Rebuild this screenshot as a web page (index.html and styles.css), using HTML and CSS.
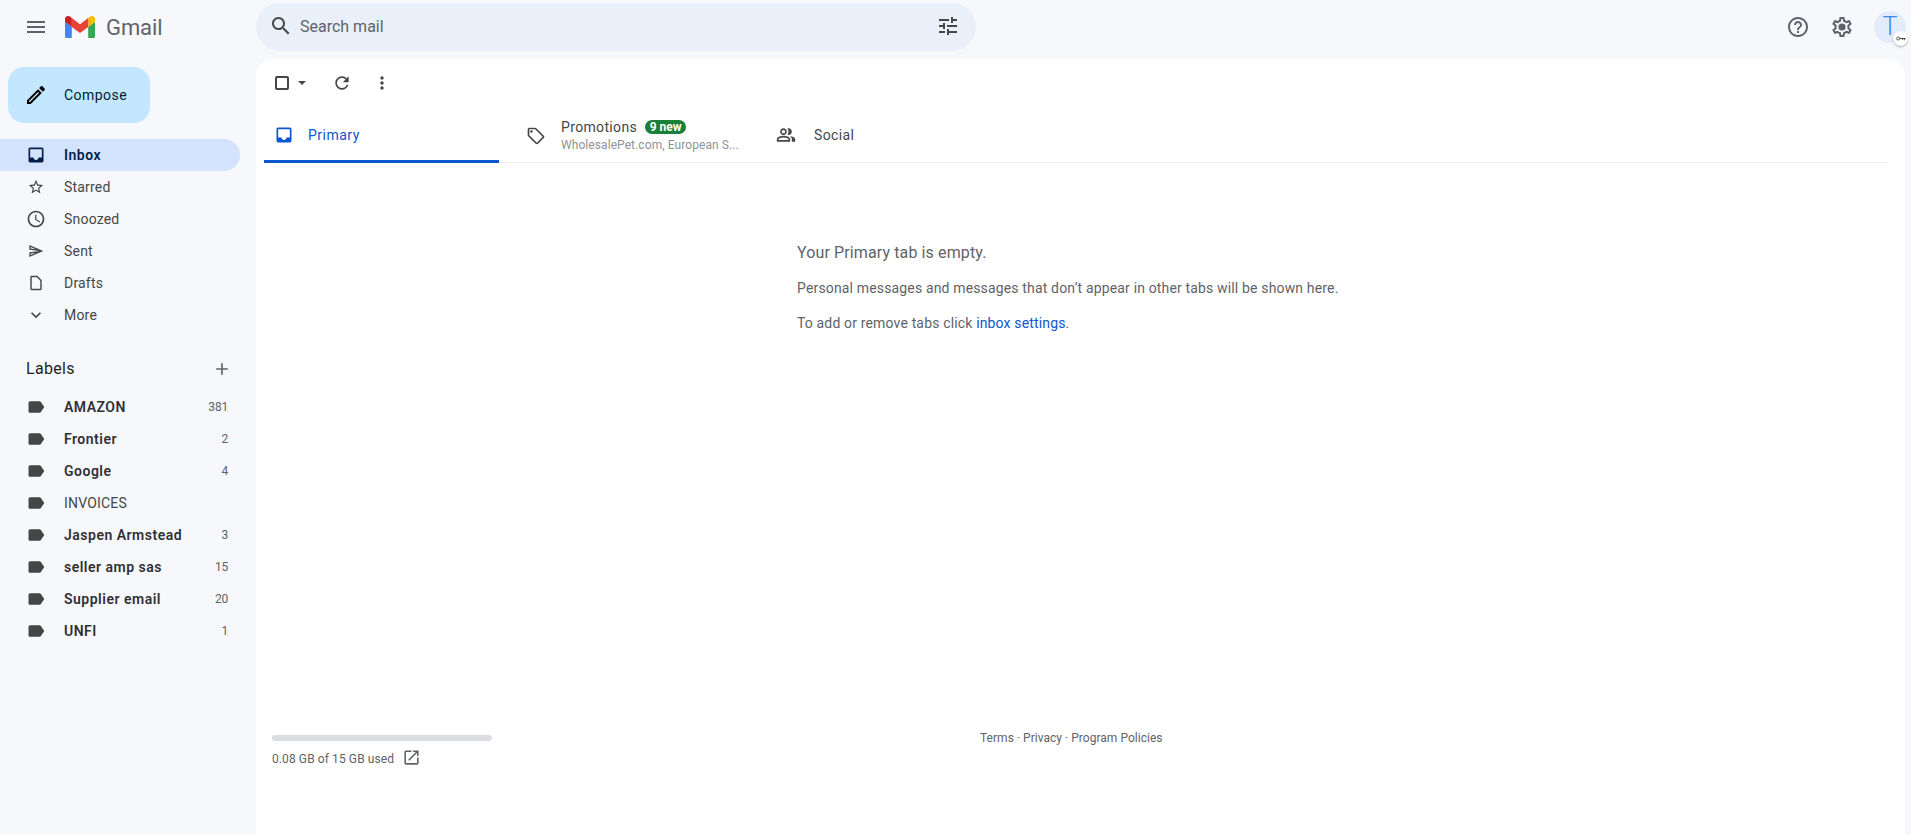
FILE: index.html
```html
<!DOCTYPE html>
<html lang="en">
<head>
<meta charset="utf-8">
<title>Gmail</title>
<link rel="stylesheet" href="styles.css">
</head>
<body>
<svg class="sprite" xmlns="http://www.w3.org/2000/svg">
  <symbol id="i-menu" viewBox="0 0 24 24"><path d="M3 18h18v-2H3v2zm0-5h18v-2H3v2zm0-7v2h18V6H3z"/></symbol>
  <symbol id="i-search" viewBox="0 0 24 24"><path d="M15.5 14h-.79l-.28-.27C15.41 12.59 16 11.11 16 9.5 16 5.91 13.09 3 9.5 3S3 5.91 3 9.5 5.91 16 9.5 16c1.61 0 3.09-.59 4.23-1.57l.27.28v.79l5 4.99L20.49 19l-4.99-5zm-6 0C7.01 14 5 11.99 5 9.5S7.01 5 9.5 5 14 7.01 14 9.5 11.99 14 9.5 14z"/></symbol>
  <symbol id="i-tune" viewBox="0 0 24 24"><path d="M3 17v2h6v-2H3zM3 5v2h10V5H3zm10 16v-2h8v-2h-8v-2h-2v6h2zM7 9v2H3v2h4v2h2V9H7zm14 4v-2H11v2h10zm-6-4h2V7h4V5h-4V3h-2v6z"/></symbol>
  <symbol id="i-help" viewBox="0 0 24 24"><path d="M11 18h2v-2h-2v2zm1-16C6.48 2 2 6.48 2 12s4.48 10 10 10 10-4.48 10-10S17.52 2 12 2zm0 18c-4.41 0-8-3.59-8-8s3.59-8 8-8 8 3.59 8 8-3.59 8-8 8zm0-14c-2.21 0-4 1.79-4 4h2c0-1.1.9-2 2-2s2 .9 2 2c0 2-3 1.75-3 5h2c0-2.25 3-2.5 3-5 0-2.21-1.79-4-4-4z"/></symbol>
  <symbol id="i-gear" viewBox="0 0 24 24"><path d="M19.43 12.98c.04-.32.07-.64.07-.98 0-.34-.03-.66-.07-.98l2.11-1.65c.19-.15.24-.42.12-.64l-2-3.46c-.09-.16-.26-.25-.44-.25-.06 0-.12.01-.17.03l-2.49 1c-.52-.4-1.08-.73-1.69-.98l-.38-2.65C14.46 2.18 14.25 2 14 2h-4c-.25 0-.46.18-.49.42l-.38 2.65c-.61.25-1.17.59-1.69.98l-2.49-1c-.06-.02-.12-.03-.18-.03-.17 0-.34.09-.43.25l-2 3.46c-.13.22-.07.49.12.64l2.11 1.65c-.04.32-.07.65-.07.98 0 .33.03.66.07.98l-2.11 1.65c-.19.15-.24.42-.12.64l2 3.46c.09.16.26.25.44.25.06 0 .12-.01.17-.03l2.49-1c.52.4 1.08.73 1.69.98l.38 2.65c.03.24.24.42.49.42h4c.25 0 .46-.18.49-.42l.38-2.65c.61-.25 1.17-.59 1.69-.98l2.49 1c.06.02.12.03.18.03.17 0 .34-.09.43-.25l2-3.46c.12-.22.07-.49-.12-.64l-2.11-1.65zm-1.98-1.71c.04.31.05.52.05.73 0 .21-.02.43-.05.73l-.14 1.13.89.7 1.08.84-.7 1.21-1.27-.51-1.04-.42-.9.68c-.43.32-.84.56-1.25.73l-1.06.43-.16 1.13-.2 1.35h-1.4l-.19-1.35-.16-1.13-1.06-.43c-.43-.18-.83-.41-1.23-.71l-.91-.7-1.06.43-1.27.51-.7-1.21 1.08-.84.89-.7-.14-1.13c-.03-.31-.05-.54-.05-.74s.02-.43.05-.73l.14-1.13-.89-.7-1.08-.84.7-1.21 1.27.51 1.04.42.9-.68c.43-.32.84-.56 1.25-.73l1.06-.43.16-1.13.2-1.35h1.39l.19 1.35.16 1.13 1.06.43c.43.18.83.41 1.23.71l.91.7 1.06-.43 1.27-.51.7 1.21-1.07.85-.89.7.14 1.13z"/><circle cx="12" cy="12" r="3.6"/></symbol>
  <symbol id="i-pencil" viewBox="0 0 24 24"><path d="M3 17.25V21h3.75L17.81 9.94l-3.75-3.75L3 17.25zM5.92 19H5v-.92l9.06-9.06.92.92L5.92 19zM20.71 5.63l-2.34-2.34c-.2-.2-.45-.29-.71-.29s-.51.1-.7.29l-1.83 1.83 3.75 3.75 1.83-1.83c.39-.39.39-1.02 0-1.41z"/></symbol>
  <symbol id="i-inbox" viewBox="0 0 24 24"><path d="M19 3H4.99c-1.11 0-1.98.89-1.98 2L3 19c0 1.1.88 2 1.99 2H19c1.1 0 2-.9 2-2V5c0-1.11-.9-2-2-2zm0 12h-4c0 1.66-1.35 3-3 3s-3-1.34-3-3H4.99V5H19v10z"/></symbol>
  <symbol id="i-star" viewBox="-2 -2 28 28"><path d="M22 9.24l-7.19-.62L12 2 9.19 8.63 2 9.24l5.46 4.73L5.82 21 12 17.27 18.18 21l-1.63-7.03L22 9.24zM12 15.4l-3.76 2.27 1-4.28-3.32-2.88 4.38-.38L12 6.1l1.71 4.04 4.38.38-3.32 2.88 1 4.28L12 15.4z"/></symbol>
  <symbol id="i-clock" viewBox="0 0 24 24"><path d="M11.99 2C6.47 2 2 6.48 2 12s4.47 10 9.99 10C17.52 22 22 17.52 22 12S17.52 2 11.99 2zM12 20c-4.42 0-8-3.58-8-8s3.58-8 8-8 8 3.58 8 8-3.58 8-8 8zm.5-13H11v6l5.25 3.15.75-1.23-4.5-2.67z"/></symbol>
  <symbol id="i-send" viewBox="-3 -3 30 30"><path d="M4.01 6.03l7.51 3.22-7.52-1 .01-2.22m7.5 8.72L4 17.97v-2.22l7.51-1M2.01 3L2 10l15 2-15 2 .01 7L23 12 2.01 3z"/></symbol>
  <symbol id="i-draft" viewBox="-2 -2 28 28"><path d="M6 2c-1.1 0-2 .9-2 2v16c0 1.1.9 2 2 2h12c1.1 0 2-.9 2-2V8l-6-6H6zm0 2h7.17L18 8.83V20H6V4z"/></symbol>
  <symbol id="i-chevron" viewBox="0 0 24 24"><path d="M7.41 8.59L12 13.17l4.59-4.58L18 10l-6 6-6-6z"/></symbol>
  <symbol id="i-label" viewBox="0 0 24 24"><path d="M17.63 5.84C17.27 5.33 16.67 5 16 5L5 5.01C3.9 5.01 3 5.9 3 7v10c0 1.1.9 1.99 2 1.99L16 19c.67 0 1.27-.33 1.63-.84L22 12l-4.37-6.16z"/></symbol>
  <symbol id="i-plus" viewBox="0 0 24 24"><path d="M19 13h-6v6h-2v-6H5v-2h6V5h2v6h6v2z"/></symbol>
  <symbol id="i-refresh" viewBox="0 0 24 24"><path d="M17.65 6.35C16.2 4.9 14.21 4 12 4c-4.42 0-7.99 3.58-7.99 8s3.57 8 7.99 8c3.73 0 6.84-2.55 7.73-6h-2.08c-.82 2.33-3.04 4-5.65 4-3.31 0-6-2.69-6-6s2.69-6 6-6c1.66 0 3.14.69 4.22 1.78L13 11h7V4l-2.35 2.35z"/></symbol>
  <symbol id="i-more" viewBox="0 0 24 24"><path d="M12 8c1.1 0 2-.9 2-2s-.9-2-2-2-2 .9-2 2 .9 2 2 2zm0 2c-1.1 0-2 .9-2 2s.9 2 2 2 2-.9 2-2-.9-2-2-2zm0 6c-1.1 0-2 .9-2 2s.9 2 2 2 2-.9 2-2-.9-2-2-2z"/></symbol>
  <symbol id="i-tag" viewBox="0 0 24 24"><path d="M21.41 11.58l-9-9C12.05 2.22 11.55 2 11 2H4c-1.1 0-2 .9-2 2v7c0 .55.22 1.05.59 1.42l9 9c.36.36.86.58 1.41.58.55 0 1.05-.22 1.41-.59l7-7c.37-.36.59-.86.59-1.41 0-.55-.23-1.06-.59-1.42zM13 20.01L4 11V4h7v-.01l9 8.99-7 7.03z"/><circle cx="6.5" cy="6.5" r="1.5"/></symbol>
  <symbol id="i-people" viewBox="0 0 24 24"><path d="M16.67 13.13C18.04 14.06 19 15.32 19 17v3h4v-3c0-2.18-3.57-3.47-6.33-3.87z"/><path d="M15 12c2.21 0 4-1.79 4-4s-1.79-4-4-4c-.47 0-.91.1-1.33.24C14.5 5.27 15 6.58 15 8s-.5 2.73-1.33 3.76c.42.14.86.24 1.33.24z"/><path d="M9 12c2.21 0 4-1.79 4-4s-1.79-4-4-4-4 1.79-4 4 1.79 4 4 4zm0-6c1.1 0 2 .9 2 2s-.9 2-2 2-2-.9-2-2 .9-2 2-2z"/><path d="M9 13c-2.67 0-8 1.34-8 4v3h16v-3c0-2.66-5.33-4-8-4zm6 5H3v-.99C3.2 16.29 6.3 15 9 15s5.8 1.29 6 2v1z"/></symbol>
  <symbol id="i-open" viewBox="0 0 24 24"><path d="M19 19H5V5h7V3H5c-1.11 0-2 .9-2 2v14c0 1.1.89 2 2 2h14c1.1 0 2-.9 2-2v-7h-2v7zM14 3v2h3.59l-9.83 9.83 1.41 1.41L19 6.41V10h2V3h-7z"/></symbol>
</svg>

<header class="topbar">
  <div class="brand">
    <svg class="ico ico-24 c-grey"><use href="#i-menu"/></svg>
    <svg class="logo" viewBox="52 42 88 66">
      <path fill="#4285f4" d="M58 108h14V74L52 59v43c0 3.32 2.69 6 6 6"/>
      <path fill="#34a853" d="M120 108h14c3.32 0 6-2.69 6-6V59l-20 15"/>
      <path fill="#fbbc04" d="M120 48v26l20-15v-8c0-7.42-8.47-11.65-14.4-7.2"/>
      <path fill="#ea4335" d="M72 74V48l24 18 24-18v26L96 92"/>
      <path fill="#c5221f" d="M52 51v8l20 15V48l-5.6-4.2c-5.94-4.45-14.4-.22-14.4 7.2"/>
    </svg>
    <span class="wordmark">Gmail</span>
  </div>
  <div class="search">
    <svg class="ico ico-24 c-dark"><use href="#i-search"/></svg>
    <span class="search-text">Search mail</span>
    <svg class="ico ico-24 c-dark search-tune"><use href="#i-tune"/></svg>
  </div>
  <div class="top-actions">
    <svg class="ico ico-24 c-grey"><use href="#i-help"/></svg>
    <svg class="ico ico-24 c-grey"><use href="#i-gear"/></svg>
    <div class="avatar">T
      <span class="avatar-badge">
        <svg viewBox="0 0 12 6" class="key"><circle cx="2.6" cy="3" r="1.8" fill="none" stroke="#444746" stroke-width="1.1"/><path d="M4.4 2.4H11.5V3.6H10.6V5H9.4V3.6H8.4V4.6H7.2V3.6H4.4z" fill="#444746"/></svg>
      </span>
    </div>
  </div>
</header>

<div class="body-row">
  <nav class="sidebar">
    <button class="compose"><svg class="ico ico-24 c-black"><use href="#i-pencil"/></svg><span>Compose</span></button>
    <ul class="nav">
      <li class="nav-item active"><svg class="ico ico-20"><use href="#i-inbox"/></svg><span>Inbox</span></li>
      <li class="nav-item"><svg class="ico ico-20"><use href="#i-star"/></svg><span>Starred</span></li>
      <li class="nav-item"><svg class="ico ico-20"><use href="#i-clock"/></svg><span>Snoozed</span></li>
      <li class="nav-item"><svg class="ico ico-20"><use href="#i-send"/></svg><span>Sent</span></li>
      <li class="nav-item"><svg class="ico ico-20"><use href="#i-draft"/></svg><span>Drafts</span></li>
      <li class="nav-item"><svg class="ico ico-20"><use href="#i-chevron"/></svg><span>More</span></li>
    </ul>
    <div class="labels-head"><span>Labels</span><svg class="ico ico-20 c-grey labels-add"><use href="#i-plus"/></svg></div>
    <ul class="nav">
      <li class="nav-item unread"><svg class="ico ico-20"><use href="#i-label"/></svg><span>AMAZON</span><em class="count">381</em></li>
      <li class="nav-item unread"><svg class="ico ico-20"><use href="#i-label"/></svg><span>Frontier</span><em class="count">2</em></li>
      <li class="nav-item unread"><svg class="ico ico-20"><use href="#i-label"/></svg><span>Google</span><em class="count">4</em></li>
      <li class="nav-item"><svg class="ico ico-20"><use href="#i-label"/></svg><span>INVOICES</span></li>
      <li class="nav-item unread"><svg class="ico ico-20"><use href="#i-label"/></svg><span>Jaspen Armstead</span><em class="count">3</em></li>
      <li class="nav-item unread"><svg class="ico ico-20"><use href="#i-label"/></svg><span>seller amp sas</span><em class="count">15</em></li>
      <li class="nav-item unread"><svg class="ico ico-20"><use href="#i-label"/></svg><span>Supplier email</span><em class="count">20</em></li>
      <li class="nav-item unread"><svg class="ico ico-20"><use href="#i-label"/></svg><span>UNFI</span><em class="count">1</em></li>
    </ul>
  </nav>

  <main class="panel">
    <div class="toolbar">
      <span class="check-wrap">
        <span class="checkbox"></span>
        <span class="caret"></span>
      </span>
      <svg class="ico ico-20 c-dark tool-refresh"><use href="#i-refresh"/></svg>
      <svg class="ico ico-20 c-dark tool-more"><use href="#i-more"/></svg>
    </div>
    <div class="tabs">
      <div class="tab tab-primary active">
        <svg class="ico ico-20"><use href="#i-inbox"/></svg>
        <span class="tab-title">Primary</span>
      </div>
      <div class="tab tab-promo">
        <svg class="ico ico-20 c-dark"><use href="#i-tag"/></svg>
        <div class="tab-stack">
          <div class="tab-line"><span class="tab-title">Promotions</span><span class="pill">9 new</span></div>
          <div class="tab-sub">WholesalePet.com, European S...</div>
        </div>
      </div>
      <div class="tab tab-social">
        <svg class="ico ico-20 c-dark"><use href="#i-people"/></svg>
        <span class="tab-title">Social</span>
      </div>
    </div>
    <section class="empty">
      <h2>Your Primary tab is empty.</h2>
      <p>Personal messages and messages that don’t appear in other tabs will be shown here.</p>
      <p>To add or remove tabs click <a href="#">inbox settings</a>.</p>
    </section>
    <footer class="foot">
      <div class="storage">
        <div class="storage-bar"></div>
        <div class="storage-text"><span>0.08 GB of 15 GB used</span><svg class="ico ico-19 c-grey"><use href="#i-open"/></svg></div>
      </div>
      <div class="terms">Terms · Privacy · Program Policies</div>
    </footer>
  </main>
</div>
</body>
</html>
```
FILE: styles.css
```css
* { box-sizing: border-box; }
html, body { margin: 0; height: 100%; }
body {
  background: #f6f8fc;
  font-family: Roboto, "Liberation Sans", sans-serif;
  font-size: 14px;
  color: #444746;
  display: flex;
  flex-direction: column;
  overflow: hidden;
}
.sprite { display: none; }
.ico { display: block; flex: none; fill: currentColor; }
.ico-24 { width: 24px; height: 24px; }
.ico-20 { width: 20px; height: 20px; }
.ico-19 { width: 19px; height: 19px; }
.c-grey { color: #5f6368; }
.c-dark { color: #444746; }
.c-black { color: #000; }

/* top bar */
.topbar { height: 59px; flex: none; display: flex; align-items: center; }
.brand { width: 256px; flex: none; display: flex; align-items: center; padding: 0 0 5px 24px; height: 59px; }
.logo { width: 30px; height: 22.5px; margin-left: 17px; flex: none; }
.wordmark { margin-left: 11px; font-size: 22px; color: #5f6368; letter-spacing: -.1px; }
.search {
  width: 720px; height: 48px; margin-bottom: 5px;
  background: #e9f0fa; border-radius: 24px;
  display: flex; align-items: center; padding: 0 16px 2px 13px;
}
.search-text { margin-left: 7px; font-size: 16px; color: #5f6368; }
.search-tune { margin-left: auto; margin-right: 0; }
.top-actions { margin-left: auto; display: flex; align-items: center; padding: 0 5px 5px 0; }
.top-actions .ico + .ico { margin-left: 20px; }
.avatar {
  position: relative; width: 32px; height: 32px; margin-left: 20px; border-radius: 50%;
  background: #e3ecfb; color: #4285f4; font-size: 25px; font-weight: 300; line-height: 32px; text-align: center;
}
.avatar-badge {
  position: absolute; right: -2px; bottom: -3px; width: 15px; height: 15px; border-radius: 50%;
  background: #fff; box-shadow: 0 1px 2px rgba(60,64,67,.4);
  display: flex; align-items: center; justify-content: center;
}
.key { width: 10px; height: 5px; display: block; }

/* layout */
.body-row { flex: 1; display: flex; min-height: 0; }
.sidebar { width: 256px; flex: none; }
.compose {
  width: 142px; height: 56px; margin: 8px 0 16px 8px; border: 0; border-radius: 16px;
  background: #c2e7ff; color: #001d35; font: 400 14px Roboto, sans-serif; letter-spacing: .45px;
  display: flex; align-items: center; padding: 0 0 0 16px; gap: 16px;
}
.nav { list-style: none; margin: 0; padding: 0; }
.nav-item {
  width: 240px; height: 32px; display: flex; align-items: center;
  padding: 0 12px 0 26px; gap: 18px; border-radius: 0 16px 16px 0;
  letter-spacing: .2px; color: #444746;
}
.nav-item.active { background: #d3e3fd; color: #041e49; font-weight: 600; letter-spacing: .5px; }
.nav-item.unread { font-weight: 600; color: #303134; letter-spacing: .5px; }
.nav-item.unread .ico { color: #444746; }
.count { margin-left: auto; font-style: normal; font-weight: 400; font-size: 12px; color: #5f6368; letter-spacing: -.2px; }
.labels-head {
  width: 240px; height: 40px; margin-top: 17px; margin-bottom: 3px;
  padding: 0 8px 0 26px; display: flex; align-items: center; justify-content: space-between;
  font-size: 16px; letter-spacing: .3px; color: #1f1f1f;
}
.labels-add { margin-top: 2px; }

/* main panel */
.panel {
  flex: 1; margin-right: 6px; background: #fff; border-radius: 16px 16px 0 0;
  display: flex; flex-direction: column; min-width: 0;
}
.toolbar { height: 49px; flex: none; display: flex; align-items: center; padding: 0 0 2px 19px; }
.check-wrap { display: flex; align-items: center; }
.checkbox { width: 14px; height: 14px; border: 2px solid #444746; border-radius: 2px; }
.caret { margin-left: 9px; border: 4px solid transparent; border-top: 4.5px solid #444746; border-bottom: 0; }
.tool-refresh { margin-left: 26px; }
.tool-more { margin-left: 20px; }
.tabs { height: 55px; flex: none; margin: 0 17px 0 8px; display: flex; border-bottom: 1px solid #eceff1; }
.tab { height: 55px; display: flex; align-items: center; }
.tab-primary { width: 235px; padding: 2px 0 0 10px; gap: 14px; color: #0b57d0; border-bottom: 3px solid #0b57d0; border-radius: 3px 3px 0 0; }
.tab-promo { width: 251px; padding-left: 27px; gap: 15px; }
.tab-social { padding: 0 0 1px 26px; gap: 18px; }
.tab-title { letter-spacing: .35px; }
.tab-primary .tab-title { letter-spacing: .5px; }
.tab-stack { min-width: 0; }
.tab-line { display: flex; align-items: center; gap: 8px; height: 18px; }
.pill { background: #188038; color: #fff; font-size: 12px; font-weight: 700; line-height: 14px; padding: 0 4.5px; border-radius: 8px; }
.tab-sub { font-size: 12px; line-height: 16px; color: #8e9398; margin-top: 1px; white-space: nowrap; letter-spacing: .08px; }

.empty { padding: 81px 0 0 541px; color: #5f6368; }
.empty h2 { margin: 0; font-size: 16px; font-weight: 400; line-height: 18px; letter-spacing: .12px; color: #5f6368; }
.empty p { margin: 18px 0 0; line-height: 17px; letter-spacing: .155px; }
.empty p + p { margin-top: 18px; }
.empty a { color: #0b57d0; text-decoration: none; }

.foot { margin-top: auto; padding: 0 0 68px 16px; display: flex; align-items: flex-start; font-size: 12px; color: #5f6368; }
.storage { width: 220px; flex: none; }
.storage-bar { height: 6px; border-radius: 3px; background: #dadce0; }
.storage-text { display: flex; align-items: center; margin-top: 7px; gap: 8px; letter-spacing: .1px; }
.storage-text span { padding-top: 3px; }
.terms { margin-left: 488px; margin-top: -4px; line-height: 14px; letter-spacing: .03px; }
```
